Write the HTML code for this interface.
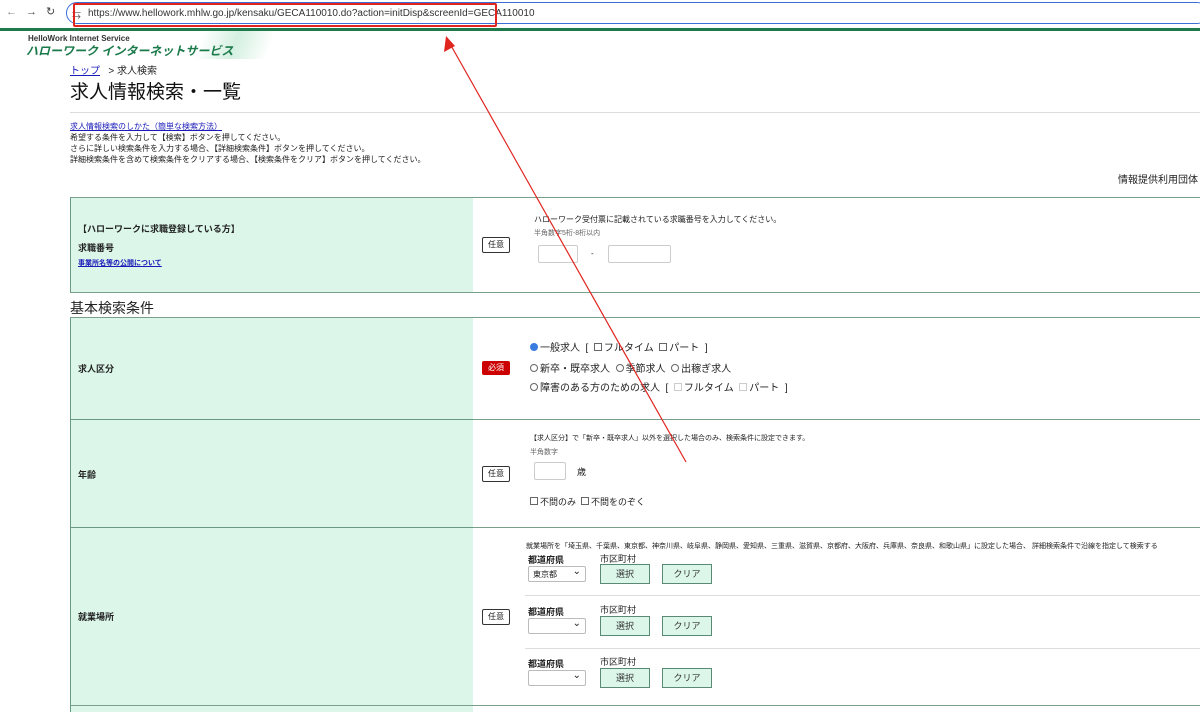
<!DOCTYPE html><html><head><meta charset="utf-8"><style>
body{margin:0;width:1200px;height:711px;overflow:hidden;background:#fff;font-family:"Liberation Sans","Noto Sans CJK JP",sans-serif;color:#222;position:relative}
.a{position:absolute;white-space:nowrap}
.s{font-size:8px}
.cell{position:absolute;left:70px;width:402px;background:#dcf7ea;border-top:1px solid #6a9a84;border-left:1px solid #6a9a84}
.line{position:absolute;left:70px;right:0;height:1px;background:#7aa08c}
.tag{position:absolute;left:482px;width:26px;height:14px;border:1px solid #333;border-radius:2px;font-size:8px;text-align:center;line-height:14px;background:#fff}
.inp{position:absolute;border:1px solid #ccc;border-radius:2px;background:#fff}
.btn{position:absolute;width:48px;height:18px;background:#dcf7ea;border:1px solid #5a8a74;font-size:9px;text-align:center;line-height:18px;color:#333}
.sel{position:absolute;width:58px;height:16px;border:1px solid #bbb;border-radius:2px;background:#fff;font-size:8px;line-height:16px;padding-left:4px;box-sizing:border-box}
.sel:after{content:"⌄";position:absolute;right:4px;top:-3px;font-size:10px}
.cb{display:inline-block;width:6px;height:6px;border:1px solid #666;margin-right:2px;vertical-align:0}
.rd{display:inline-block;width:6px;height:6px;border:1px solid #666;border-radius:50%;margin-right:2px;vertical-align:0}
</style></head><body>
<div class="a" style="left:6px;top:6px;font-size:11px;color:#888">←</div>
<div class="a" style="left:26px;top:6px;font-size:11px;color:#444">→</div>
<div class="a" style="left:46px;top:5px;font-size:11px;color:#444">↻</div>
<div class="a" style="left:66px;top:2px;width:1140px;height:20px;border:1.5px solid #3a6fd8;border-radius:11px"></div>
<div class="a" style="left:72px;top:8px;font-size:9px;color:#555">⇆</div>
<div class="a" style="left:88px;top:8px;font-size:10px;color:#333">https://www.hellowork.mhlw.go.jp/kensaku/GECA110010.do?action=initDisp&amp;screenId=GECA110010</div>
<div class="a" style="left:73px;top:3px;width:420px;height:20px;border:2px solid #e0251f;border-radius:2px"></div>
<div class="a" style="left:0;top:28px;width:1200px;height:3px;background:#1e7a4a"></div>
<div class="a" style="left:180px;top:31px;width:110px;height:28px;background:linear-gradient(110deg,#fff 20%,#cfeedd 50%,#fff 80%);opacity:.9"></div>
<div class="a" style="left:28px;top:34px;font-size:8px;font-weight:bold;color:#333">HelloWork Internet Service</div>
<div class="a" style="left:26px;top:42px;font-size:12px;font-weight:bold;font-style:italic;color:#1a7a4a">ハローワーク インターネットサービス</div>
<div class="a" style="left:70px;top:62px;font-size:10px"><span style="color:#1a1ab8;text-decoration:underline">トップ</span>&nbsp;&nbsp; &gt; 求人検索</div>
<div class="a" style="left:70px;top:77px;font-size:19px;color:#111">求人情報検索・一覧</div>
<div class="a" style="left:70px;top:112px;width:1130px;height:1px;background:#ddd"></div>
<div class="a s" style="left:70px;top:121px;color:#1a1ab8;text-decoration:underline">求人情報検索のしかた（簡単な検索方法）</div>
<div class="a s" style="left:70px;top:132px">希望する条件を入力して【検索】ボタンを押してください。</div>
<div class="a s" style="left:70px;top:143px">さらに詳しい検索条件を入力する場合、【詳細検索条件】ボタンを押してください。</div>
<div class="a s" style="left:70px;top:154px">詳細検索条件を含めて検索条件をクリアする場合、【検索条件をクリア】ボタンを押してください。</div>
<div class="a" style="left:1118px;top:171px;font-size:10px">情報提供利用団体 I</div>
<div class="cell" style="top:197px;height:95px"></div>
<div class="line" style="top:197px"></div><div class="line" style="top:292px"></div>
<div class="a" style="left:78px;top:222px;font-size:9px;font-weight:bold">【ハローワークに求職登録している方】</div>
<div class="a" style="left:78px;top:241px;font-size:9px;font-weight:bold">求職番号</div>
<div class="a" style="left:78px;top:258px;font-size:7px;font-weight:bold;color:#1a1ab8;text-decoration:underline">事業所名等の公開について</div>
<div class="tag" style="top:237px">任意</div>
<div class="a s" style="left:534px;top:214px">ハローワーク受付票に記載されている求職番号を入力してください。</div>
<div class="a" style="left:534px;top:228px;font-size:7px;color:#666">半角数字5桁-8桁以内</div>
<div class="inp" style="left:538px;top:245px;width:38px;height:16px"></div>
<div class="a s" style="left:591px;top:249px">-</div>
<div class="inp" style="left:608px;top:245px;width:61px;height:16px"></div>
<div class="a" style="left:70px;top:298px;font-size:14px;color:#222">基本検索条件</div>
<div class="cell" style="top:317px;height:102px"></div>
<div class="line" style="top:317px"></div><div class="line" style="top:419px"></div>
<div class="a" style="left:78px;top:362px;font-size:9px;font-weight:bold">求人区分</div>
<div class="a" style="left:482px;top:361px;width:28px;height:14px;background:#c00;color:#fff;font-size:8px;text-align:center;line-height:14px;border-radius:2px">必須</div>
<div class="a" style="left:530px;top:339px;font-size:10px"><span class="rd" style="background:#3a7be0;border-color:#3a7be0"></span>一般求人 &nbsp;[&nbsp;&nbsp;<span class="cb"></span>フルタイム &nbsp;<span class="cb"></span>パート &nbsp;]</div>
<div class="a" style="left:530px;top:360px;font-size:10px"><span class="rd"></span>新卒・既卒求人 &nbsp;<span class="rd"></span>季節求人 &nbsp;<span class="rd"></span>出稼ぎ求人</div>
<div class="a" style="left:530px;top:379px;font-size:10px"><span class="rd"></span>障害のある方のための求人 &nbsp;[&nbsp;&nbsp;<span class="cb" style="border-color:#ccc"></span>フルタイム &nbsp;<span class="cb" style="border-color:#ccc"></span>パート &nbsp;]</div>
<div class="cell" style="top:419px;height:108px"></div>
<div class="line" style="top:527px"></div>
<div class="a" style="left:78px;top:468px;font-size:9px;font-weight:bold">年齢</div>
<div class="tag" style="top:466px">任意</div>
<div class="a" style="left:530px;top:433px;font-size:7px">【求人区分】で「新卒・既卒求人」以外を選択した場合のみ、検索条件に設定できます。</div>
<div class="a" style="left:530px;top:447px;font-size:7px;color:#666">半角数字</div>
<div class="inp" style="left:534px;top:462px;width:30px;height:16px"></div>
<div class="a" style="left:577px;top:465px;font-size:9px">歳</div>
<div class="a" style="left:530px;top:495px;font-size:9px"><span class="cb"></span>不問のみ &nbsp;<span class="cb"></span>不問をのぞく</div>
<div class="cell" style="top:527px;height:184px"></div>
<div class="a" style="left:78px;top:610px;font-size:9px;font-weight:bold">就業場所</div>
<div class="tag" style="top:609px">任意</div>
<div class="a" style="left:526px;top:541px;font-size:7px">就業場所を「埼玉県、千葉県、東京都、神奈川県、岐阜県、静岡県、愛知県、三重県、滋賀県、京都府、大阪府、兵庫県、奈良県、和歌山県」に設定した場合、 詳細検索条件で沿線を指定して検索する</div>
<div class="a" style="left:528px;top:553px;font-size:9px;font-weight:bold">都道府県</div><div class="a" style="left:600px;top:552px;font-size:9px">市区町村</div>
<div class="sel" style="left:528px;top:566px">東京都</div><div class="btn" style="left:600px;top:564px">選択</div><div class="btn" style="left:662px;top:564px">クリア</div>
<div class="a" style="left:525px;top:595px;right:0;height:1px;background:#ddd"></div>
<div class="a" style="left:528px;top:605px;font-size:9px;font-weight:bold">都道府県</div><div class="a" style="left:600px;top:603px;font-size:9px">市区町村</div>
<div class="sel" style="left:528px;top:618px"></div><div class="btn" style="left:600px;top:616px">選択</div><div class="btn" style="left:662px;top:616px">クリア</div>
<div class="a" style="left:525px;top:648px;right:0;height:1px;background:#ddd"></div>
<div class="a" style="left:528px;top:657px;font-size:9px;font-weight:bold">都道府県</div><div class="a" style="left:600px;top:655px;font-size:9px">市区町村</div>
<div class="sel" style="left:528px;top:670px"></div><div class="btn" style="left:600px;top:668px">選択</div><div class="btn" style="left:662px;top:668px">クリア</div>
<div class="line" style="top:705px"></div>
<svg class="a" style="left:0;top:0" width="1200" height="711"><line x1="449" y1="42" x2="686" y2="462" stroke="#e0251f" stroke-width="1.2"/><polygon points="446,36 444,52 455,46" fill="#e0251f"/></svg>
</body></html>
